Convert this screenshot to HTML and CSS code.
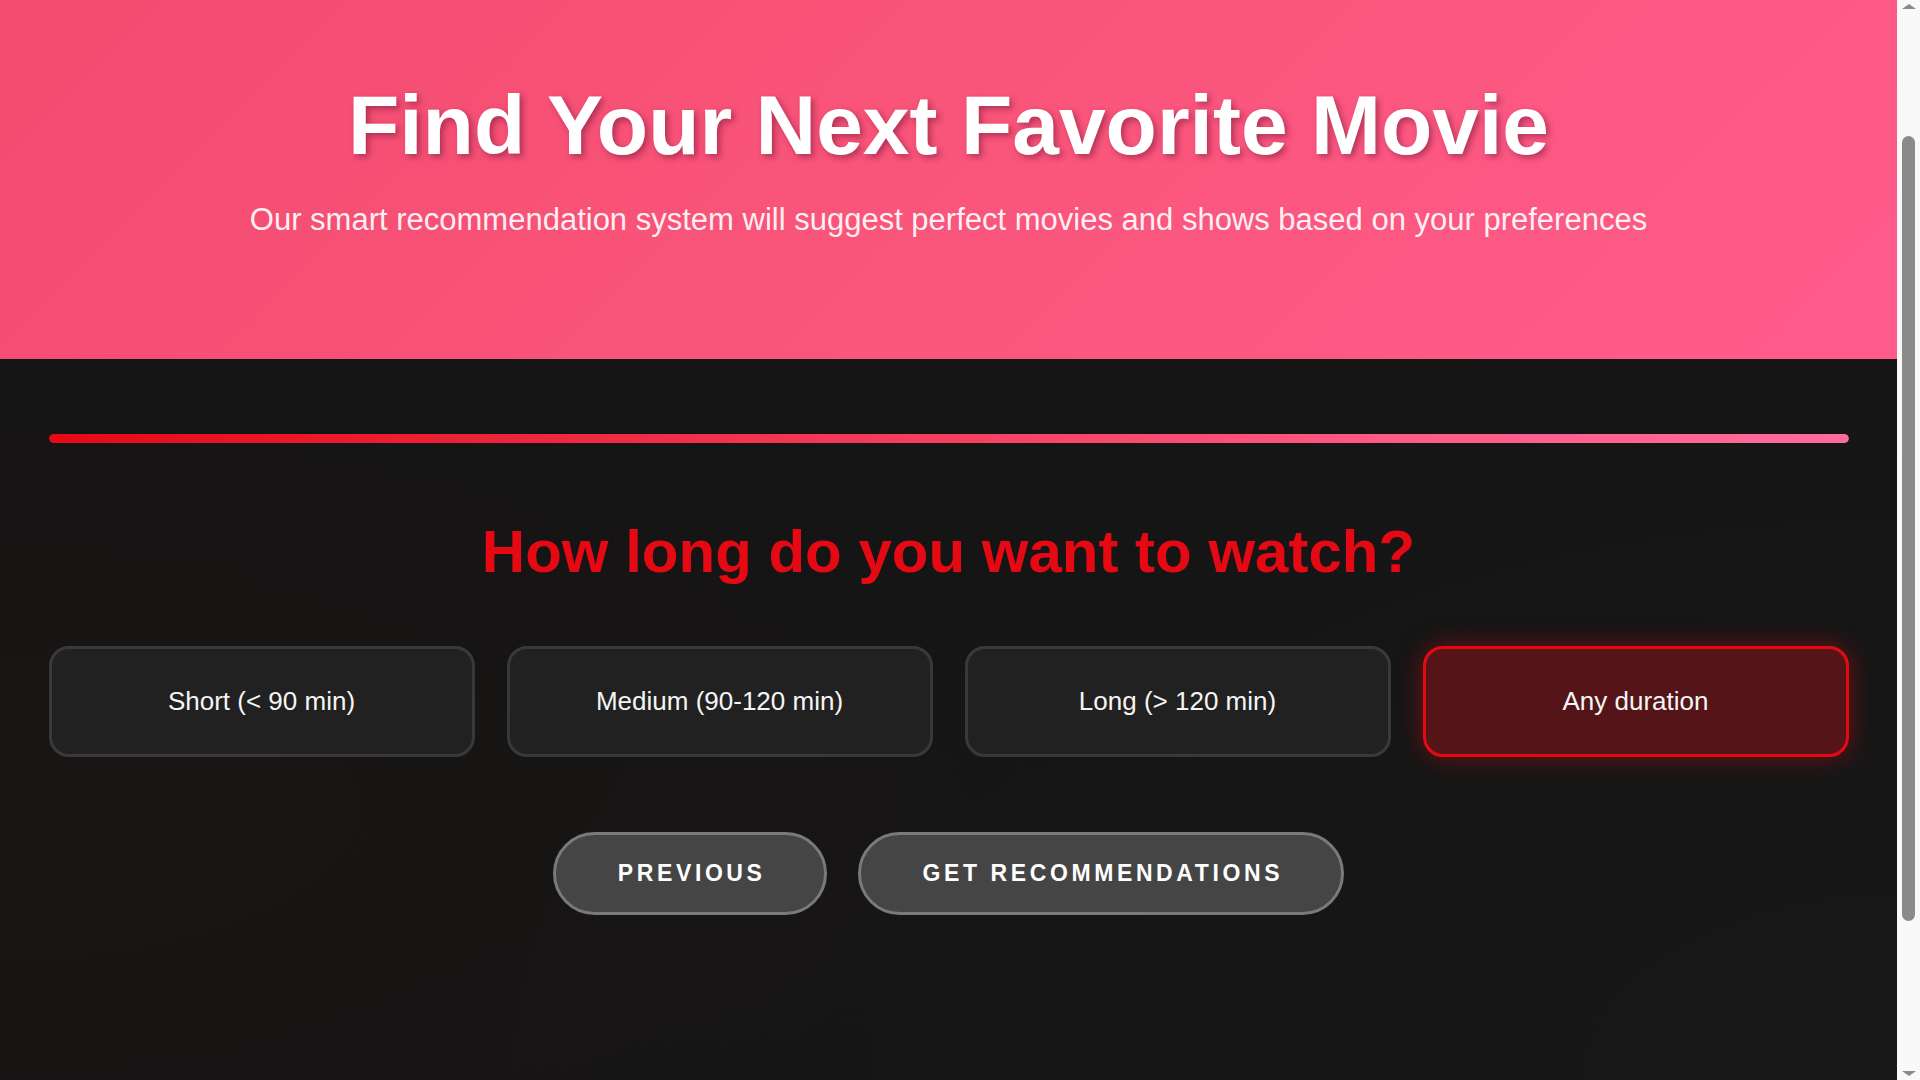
FILE: index.html
```html
<!DOCTYPE html>
<html lang="en">
<head>
<meta charset="utf-8">
<title>Movie Recommendations</title>
<link rel="stylesheet" href="styles.css">
</head>
<body>
<header class="hero">
  <h1 class="hero-title">Find Your Next Favorite Movie</h1>
  <p class="hero-sub">Our smart recommendation system will suggest perfect movies and shows based on your preferences</p>
</header>
<main class="quiz">
  <div class="progress"><div class="progress-fill"></div></div>
  <h2 class="question">How long do you want to watch?</h2>
  <div class="options">
    <button class="option">Short (&lt; 90 min)</button>
    <button class="option">Medium (90-120 min)</button>
    <button class="option">Long (&gt; 120 min)</button>
    <button class="option selected">Any duration</button>
  </div>
  <div class="nav">
    <button class="nav-btn">Previous</button>
    <button class="nav-btn">Get Recommendations</button>
  </div>
</main>
<div class="scrollbar" aria-hidden="true">
  <span class="sb-arrow sb-up"></span>
  <div class="sb-track"><span class="sb-thumb"></span></div>
  <span class="sb-arrow sb-down"></span>
</div>
</body>
</html>
```
FILE: styles.css
```css
html, body {
  margin: 0;
  padding: 0;
}
body {
  font-family: "Liberation Sans", Arial, sans-serif;
  background-color: #141414;
  background-image:
    radial-gradient(ellipse at 0% 75%, rgba(36, 24, 20, 0.3), transparent 50%),
    radial-gradient(ellipse at 100% 100%, rgba(30, 30, 30, 0.4), transparent 60%);
  color: #fff;
  min-height: 100vh;
  margin-right: 23px;
}
.hero {
  background: linear-gradient(135deg, #f34a70 0%, #f95479 45%, #ff5c8c 100%);
  padding: 77px 20px 121px;
  text-align: center;
}
.hero-title {
  margin: 0;
  font-size: 84px;
  font-weight: 700;
  line-height: normal;
  color: #fff;
  text-shadow: 3px 3px 6px rgba(90, 10, 40, 0.45);
}
.hero-sub {
  margin: 28px 0 0;
  font-size: 31px;
  line-height: normal;
  color: rgba(255, 255, 255, 0.92);
}
.quiz {
  max-width: 1800px;
  margin: 0 auto;
  padding: 75px 0 0;
}
.progress {
  height: 9px;
  border-radius: 5px;
  background: #1f1f1f;
  overflow: hidden;
}
.progress-fill {
  height: 100%;
  width: 100%;
  border-radius: 5px;
  background: linear-gradient(90deg, #e50914 0%, #ff5a86 75%, #ff6b9d 100%);
}
.question {
  margin: 74px 0 0;
  text-align: center;
  font-size: 60px;
  font-weight: 700;
  line-height: normal;
  color: #e50914;
}
.options {
  display: grid;
  grid-template-columns: repeat(4, 1fr);
  gap: 32px;
  margin-top: 60px;
}
.option {
  height: 111px;
  background: #212121;
  border: 3px solid #393939;
  border-radius: 20px;
  color: #f5f5f5;
  font-family: "Liberation Sans", Arial, sans-serif;
  font-size: 26px;
  cursor: pointer;
}
.option.selected {
  background: #541418;
  border-color: #e50914;
  box-shadow: 0 0 24px rgba(229, 9, 20, 0.45);
}
.nav {
  display: flex;
  justify-content: center;
  gap: 31px;
  margin-top: 75px;
}
.nav-btn {
  background: #454545;
  border: 3px solid #7a7a7a;
  border-radius: 50px;
  color: #fff;
  font-family: "Liberation Sans", Arial, sans-serif;
  font-size: 23px;
  font-weight: 700;
  letter-spacing: 3.6px;
  text-transform: uppercase;
  padding: 25px 58px 25px 62px;
  line-height: normal;
  cursor: pointer;
}
.scrollbar {
  position: fixed;
  top: 0;
  right: 0;
  width: 23px;
  height: 100vh;
  background: #f9f9f9;
  display: flex;
  flex-direction: column;
  align-items: center;
}
.sb-arrow {
  width: 0;
  height: 0;
  border-left: 7px solid transparent;
  border-right: 7px solid transparent;
  margin: 4px 0;
}
.sb-up {
  border-bottom: 5px solid #8a8a8a;
}
.sb-down {
  border-top: 5px solid #8a8a8a;
}
.sb-track {
  flex: 1;
  width: 100%;
  display: flex;
  justify-content: center;
  padding-top: 123px;
  padding-bottom: 146px;
  box-sizing: border-box;
}
.sb-thumb {
  width: 13px;
  border-radius: 7px;
  background: #8a8a8a;
}
```
